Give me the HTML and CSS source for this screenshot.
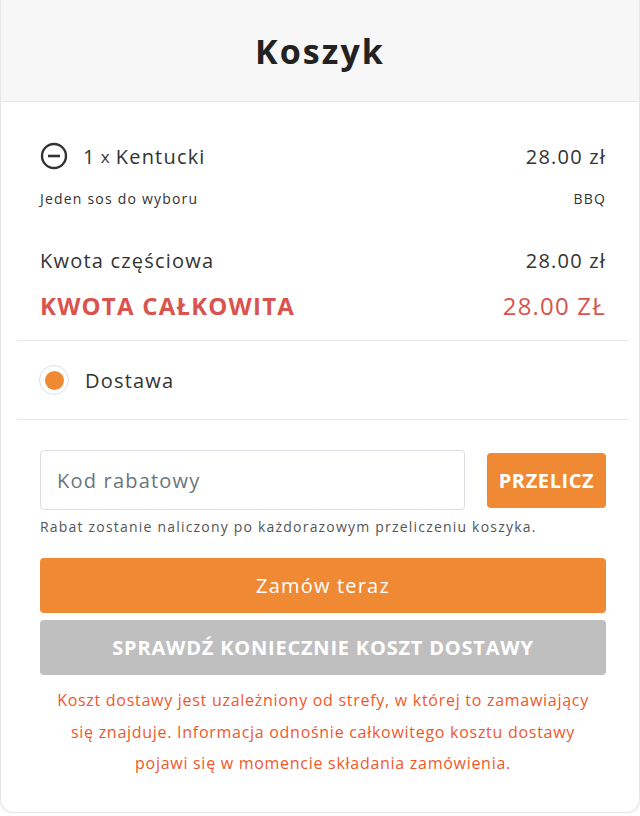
FILE: index.html
```html
<!DOCTYPE html>
<html lang="pl">
<head>
    <meta charset="UTF-8">
    <title>Koszyk</title>
    <link rel="stylesheet" href="styles.css">
</head>
<body>
    <div class="cart">
        <div class="cart-header">
            <h1>Koszyk</h1>
        </div>
        <div class="cart-body">
            <div class="item">
                <div class="row item-main">
                    <span class="item-name">
                        <svg class="remove" width="28" height="28" viewBox="0 0 28 28">
                            <circle cx="14" cy="14" r="12" fill="none" stroke="#333" stroke-width="2.4"/>
                            <line x1="8" y1="14" x2="20" y2="14" stroke="#333" stroke-width="2.6"/>
                        </svg>
                        1 <span class="x">x</span> Kentucki
                    </span>
                    <span>28.00 zł</span>
                </div>
                <div class="row item-option">
                    <span>Jeden sos do wyboru</span>
                    <span>BBQ</span>
                </div>
            </div>

            <div class="row subtotal">
                <span>Kwota częściowa</span>
                <span class="price">28.00 zł</span>
            </div>
            <div class="row total">
                <span class="total-label">KWOTA CAŁKOWITA</span>
                <span>28.00 ZŁ</span>
            </div>
        </div>

        <div class="delivery">
            <span class="radio"><span class="dot"></span></span>
            <span>Dostawa</span>
        </div>

        <div class="cart-footer">
            <div class="coupon">
                <input type="text" placeholder="Kod rabatowy">
                <button class="btn btn-orange btn-small">PRZELICZ</button>
            </div>
            <p class="hint">Rabat zostanie naliczony po każdorazowym przeliczeniu koszyka.</p>
            <button class="btn btn-orange btn-block">Zamów teraz</button>
            <button class="btn btn-grey btn-block">SPRAWDŹ KONIECZNIE KOSZT DOSTAWY</button>
            <p class="notice">Koszt dostawy jest uzależniony od strefy, w której to zamawiający się znajduje. Informacja odnośnie całkowitego kosztu dostawy pojawi się w momencie składania zamówienia.</p>
        </div>
    </div>
</body>
</html>
```
FILE: styles.css
```css
:root {
    --orange: #ef8933;
    --red: #d9534f;
    --text: #333;
    --line: #e8e8e8;
}
body {
    margin: 0;
    font-family: "Open Sans", "Liberation Sans", sans-serif;
    letter-spacing: 0.075em;
    color: var(--text);
    background: #fff;
}
.cart {
    width: 638px;
    height: 812px;
    border: 1px solid #e6e6e6;
    border-top: 0;
    border-radius: 0 0 14px 14px;
    box-shadow: 0 1px 3px rgba(0, 0, 0, 0.08);
    overflow: hidden;
}
.cart-header {
    height: 101px;
    background: #f7f7f7;
    border-bottom: 1px solid var(--line);
    display: flex;
    align-items: center;
    justify-content: center;
}
.cart-header h1 {
    margin: 0;
    font-size: 34px;
    font-weight: 700;
    color: #222;
    letter-spacing: 0.06em;
}
.cart-body {
    padding: 38px 33px 18px 39px;
}
.row {
    display: flex;
    justify-content: space-between;
    align-items: center;
}
.item-main {
    font-size: 20px;
    height: 32px;
}
.item-name {
    display: flex;
    align-items: center;
}
.remove {
    margin-right: 15px;
}
.x {
    font-size: 17px;
    margin: 0 5px;
}
.item-option {
    font-size: 14px;
    margin-top: 17px;
}
.subtotal {
    font-size: 20px;
    margin-top: 39px;
}
.total {
    font-size: 24px;
    color: var(--red);
    margin-top: 15px;
}
.total-label {
    font-weight: 700;
}
.delivery {
    margin: 0 11px 0 16px;
    border-top: 1px solid var(--line);
    border-bottom: 1px solid var(--line);
    height: 78px;
    display: flex;
    align-items: center;
    padding-left: 22px;
    font-size: 20px;
}
.radio {
    width: 30px;
    height: 30px;
    border: 1px solid #dcdfe4;
    border-radius: 50%;
    display: flex;
    align-items: center;
    justify-content: center;
    margin-right: 16px;
    box-sizing: border-box;
}
.dot {
    width: 19px;
    height: 19px;
    border-radius: 50%;
    background: var(--orange);
}
.cart-footer {
    padding: 30px 33px 0 39px;
}
.coupon {
    display: flex;
    align-items: center;
    justify-content: space-between;
}
.coupon input {
    width: 425px;
    height: 60px;
    box-sizing: border-box;
    border: 1px solid #d9dce0;
    border-radius: 4px;
    padding: 0 16px;
    font-family: inherit;
    font-size: 20px;
    letter-spacing: inherit;
    color: var(--text);
}
.coupon input::placeholder {
    color: #6c757d;
}
.btn {
    border: 0;
    border-radius: 4px;
    color: #fff;
    font-family: inherit;
    font-size: 20px;
    letter-spacing: inherit;
    cursor: pointer;
}
.btn-orange {
    background: var(--orange);
}
.btn-grey {
    background: #bfbfbf;
    font-weight: 700;
    letter-spacing: 0.04em;
}
.btn-small {
    width: 119px;
    height: 55px;
    font-weight: 700;
    letter-spacing: 0.03em;
}
.btn-block {
    display: block;
    width: 100%;
    height: 55px;
}
.btn-block + .btn-block {
    margin-top: 7px;
}
.hint {
    font-size: 14px;
    color: #555;
    margin: 7px 0 22px;
}
.notice {
    color: #f0582a;
    font-size: 16px;
    line-height: 31.5px;
    letter-spacing: 0.045em;
    text-align: center;
    margin: 10px 8px 0;
}
```
